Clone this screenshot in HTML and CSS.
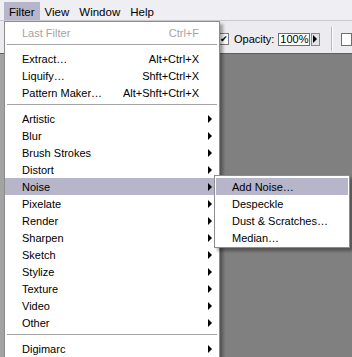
FILE: index.html
```html
<!DOCTYPE html>
<html lang="en">
<head>
    <meta charset="UTF-8">
    <meta name="viewport" content="width=device-width, initial-scale=1.0">
    <title>Filter Menu</title>
    <link rel="stylesheet" href="styles.css">
</head>
<body>
    <div class="menubar">
        <span class="menubar-item active">Filter</span>
        <span class="menubar-item">View</span>
        <span class="menubar-item">Window</span>
        <span class="menubar-item">Help</span>
    </div>

    <div class="toolbar">
        <span class="check">&#10004;</span>
        <span class="label">Opacity:</span>
        <span class="field">100%</span>
        <span class="spin"><span class="arrow"></span></span>
        <span class="tool-sep"></span>
        <span class="swatch"></span>
    </div>

    <div class="canvas"></div>

    <!-- the open Filter menu -->
    <ul class="menu">
        <li class="item disabled"><span>Last Filter</span><span class="key">Ctrl+F</span></li>
        <li class="sep"></li>
        <li class="item"><span>Extract…</span><span class="key">Alt+Ctrl+X</span></li>
        <li class="item"><span>Liquify…</span><span class="key">Shft+Ctrl+X</span></li>
        <li class="item"><span>Pattern Maker…</span><span class="key">Alt+Shft+Ctrl+X</span></li>
        <li class="sep"></li>
        <li class="item"><span>Artistic</span><span class="key"></span><span class="arrow"></span></li>
        <li class="item"><span>Blur</span><span class="key"></span><span class="arrow"></span></li>
        <li class="item"><span>Brush Strokes</span><span class="key"></span><span class="arrow"></span></li>
        <li class="item"><span>Distort</span><span class="key"></span><span class="arrow"></span></li>
        <li class="item hover"><span>Noise</span><span class="key"></span><span class="arrow"></span>
            <ul class="submenu">
                <li class="item hover"><span>Add Noise…</span></li>
                <li class="item"><span>Despeckle</span></li>
                <li class="item"><span>Dust &amp; Scratches…</span></li>
                <li class="item"><span>Median…</span></li>
            </ul>
        </li>
        <li class="item"><span>Pixelate</span><span class="key"></span><span class="arrow"></span></li>
        <li class="item"><span>Render</span><span class="key"></span><span class="arrow"></span></li>
        <li class="item"><span>Sharpen</span><span class="key"></span><span class="arrow"></span></li>
        <li class="item"><span>Sketch</span><span class="key"></span><span class="arrow"></span></li>
        <li class="item"><span>Stylize</span><span class="key"></span><span class="arrow"></span></li>
        <li class="item"><span>Texture</span><span class="key"></span><span class="arrow"></span></li>
        <li class="item"><span>Video</span><span class="key"></span><span class="arrow"></span></li>
        <li class="item"><span>Other</span><span class="key"></span><span class="arrow"></span></li>
        <li class="sep"></li>
        <li class="item"><span>Digimarc</span><span class="key"></span><span class="arrow"></span></li>
        <li class="item"><span>&nbsp;</span><span class="key"></span></li>
    </ul>
</body>
</html>
```

FILE: styles.css
```css
html, body {
    height: 100%;
}

body {
    margin: 0;
    overflow: hidden;
    position: relative;
    display: flex;
    flex-direction: column;
    background-color: #808080;
    font-family: "Liberation Sans", Arial, sans-serif;
    font-size: 11px;
    color: #000000;
}

.menubar {
    height: 21px;
    display: flex;
    align-items: stretch;
    padding-left: 4px;
    background-color: #efeef2;
    border-bottom: 1px solid #c9c8cf;
    box-sizing: border-box;
}

.menubar-item {
    display: flex;
    align-items: center;
    padding: 2px 5px 0 5px;
    margin-top: 2px;
    font-size: 11.5px;
}

.menubar-item.active {
    background-color: #b7b5c9;
}

.toolbar {
    height: 33px;
    display: flex;
    align-items: center;
    padding: 4px 0 0 219px;
    box-sizing: border-box;
    background-color: #ecebef;
    border-bottom: 1px solid #5e5e5e;
    white-space: nowrap;
}

.check {
    width: 10px;
    height: 10px;
    border: 1px solid #7b7b7b;
    background-color: #ffffff;
    font-size: 9px;
    line-height: 10px;
    text-align: center;
}

.label {
    margin-left: 5px;
}

.field {
    margin-left: 4px;
    width: 30px;
    height: 11px;
    line-height: 11px;
    padding-left: 1px;
    border: 1px solid #6f6f6f;
    background-color: #ffffff;
}

.spin {
    margin-left: 1px;
    width: 11px;
    height: 11px;
    border: 1px solid #8a8a8a;
    background-color: #e4e4e8;
    display: flex;
    align-items: center;
    justify-content: center;
}

.tool-sep {
    margin-left: 11px;
    width: 1px;
    height: 24px;
    background-color: #b8b8b8;
    border-right: 1px solid #ffffff;
}

.swatch {
    margin-left: 8px;
    width: 14px;
    height: 11px;
    border: 1px solid #6f6f6f;
    background-color: #ffffff;
}

.canvas {
    flex: 1;
    background-color: #808080;
    border-left: 4px solid #a3a3a3;
}

.arrow {
    width: 0;
    height: 0;
    border-left: 4px solid #000000;
    border-top: 4px solid transparent;
    border-bottom: 4px solid transparent;
}

.menu,
.submenu {
    list-style: none;
    margin: 0;
    padding: 2px 0;
    background-color: #ffffff;
    border: 1px solid #8d8d8d;
    box-shadow: 3px 3px 3px rgba(0, 0, 0, 0.35);
}

.menu {
    position: absolute;
    top: 21px;
    left: 4px;
    width: 214px;
}

.item {
    position: relative;
    height: 17px;
    display: grid;
    grid-template-columns: 1fr auto 20px;
    align-items: center;
    padding-left: 17px;
    white-space: nowrap;
}

.item .arrow {
    margin-left: 9px;
}

.item.disabled {
    color: #a4a4a4;
}

.item.hover {
    background-color: #b7b5c9;
}

.sep {
    height: 1px;
    margin: 3px 2px 5px 2px;
    background-color: #a4a4a4;
}

.submenu {
    position: absolute;
    top: -3px;
    left: 209px;
    width: 134px;
    padding: 2px 0 1px 0;
}

.submenu .item {
    display: flex;
    padding-left: 16px;
    margin: 0 1px;
}
```
